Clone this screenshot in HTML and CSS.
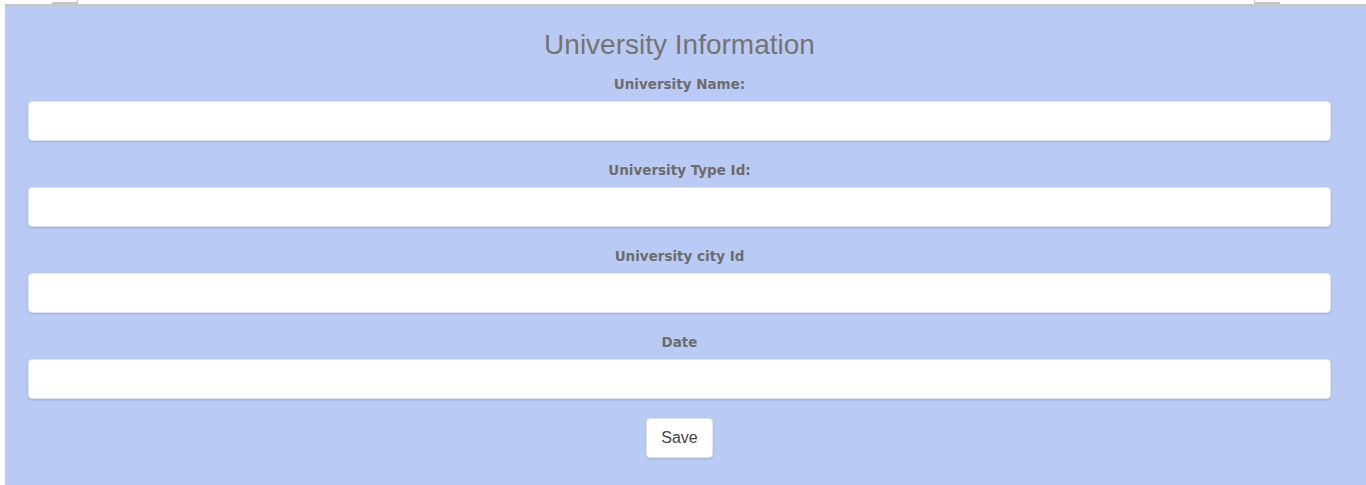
FILE: index.html
```html
<!DOCTYPE html>
<html lang="en">
<head>
<meta charset="utf-8">
<title>University Information</title>
<link rel="stylesheet" href="styles.css">
</head>
<body>
<div class="topbar">
  <span class="tab tab-left"></span>
  <span class="tab tab-right"></span>
</div>
<main class="panel">
  <h1 class="title">University Information</h1>
  <form class="form">
    <label class="label" for="uname">University Name:</label>
    <input class="field" id="uname" type="text">
    <label class="label" for="utype">University Type Id:</label>
    <input class="field" id="utype" type="text">
    <label class="label" for="ucity">University city Id</label>
    <input class="field" id="ucity" type="text">
    <label class="label" for="udate">Date</label>
    <input class="field field-last" id="udate" type="text">
    <button class="save" type="button">Save</button>
  </form>
</main>
</body>
</html>
```

FILE: styles.css
```css
html, body {
  margin: 0;
  padding: 0;
  background: #ffffff;
  height: 100%;
  overflow: hidden;
}
body {
  font-family: "Liberation Sans", Arial, sans-serif;
}
.topbar {
  height: 4px;
  display: flex;
  padding-left: 52px;
  padding-right: 86px;
}
.tab {
  display: block;
  width: 25px;
  height: 2px;
  border-bottom: 2px solid #c6c6c6;
}
.tab-left {
  border-right: 1px solid #c6c6c6;
}
.tab-right {
  margin-left: auto;
  border-left: 1px solid #c6c6c6;
}
.panel {
  box-sizing: border-box;
  margin-left: 5px;
  border-top: 2px solid #c6c6c6;
  background: #b9cbf5;
  padding: 22px 35px 20px 23px;
  height: calc(100vh - 4px);
}
.title {
  margin: 0;
  text-align: center;
  font-weight: normal;
  font-size: 28px;
  line-height: 34px;
  color: #747474;
  margin-bottom: 12px;
}
.form {
  display: flex;
  flex-direction: column;
  align-items: stretch;
}
.label {
  display: block;
  text-align: center;
  font-family: "DejaVu Sans", Verdana, sans-serif;
  font-weight: bold;
  font-size: 13.5px;
  line-height: 20px;
  color: #6c6c6c;
  margin-bottom: 7px;
}
.field {
  display: block;
  box-sizing: border-box;
  height: 40px;
  margin: 0 0 19px 0;
  border: 1px solid #e2e4ea;
  border-radius: 4px;
  background: #ffffff;
  box-shadow: 0 1px 2px rgba(0, 0, 0, 0.15);
  font-size: 14px;
  padding: 6px 12px;
}
.field-last {
  margin-bottom: 19px;
}
.save {
  align-self: center;
  box-sizing: border-box;
  width: 67px;
  height: 40px;
  border: 1px solid #e2e4ea;
  border-radius: 4px;
  background: #ffffff;
  box-shadow: 0 1px 2px rgba(0, 0, 0, 0.15);
  font-family: "Liberation Sans", Arial, sans-serif;
  font-size: 16px;
  color: #444;
  padding: 0;
}
```
